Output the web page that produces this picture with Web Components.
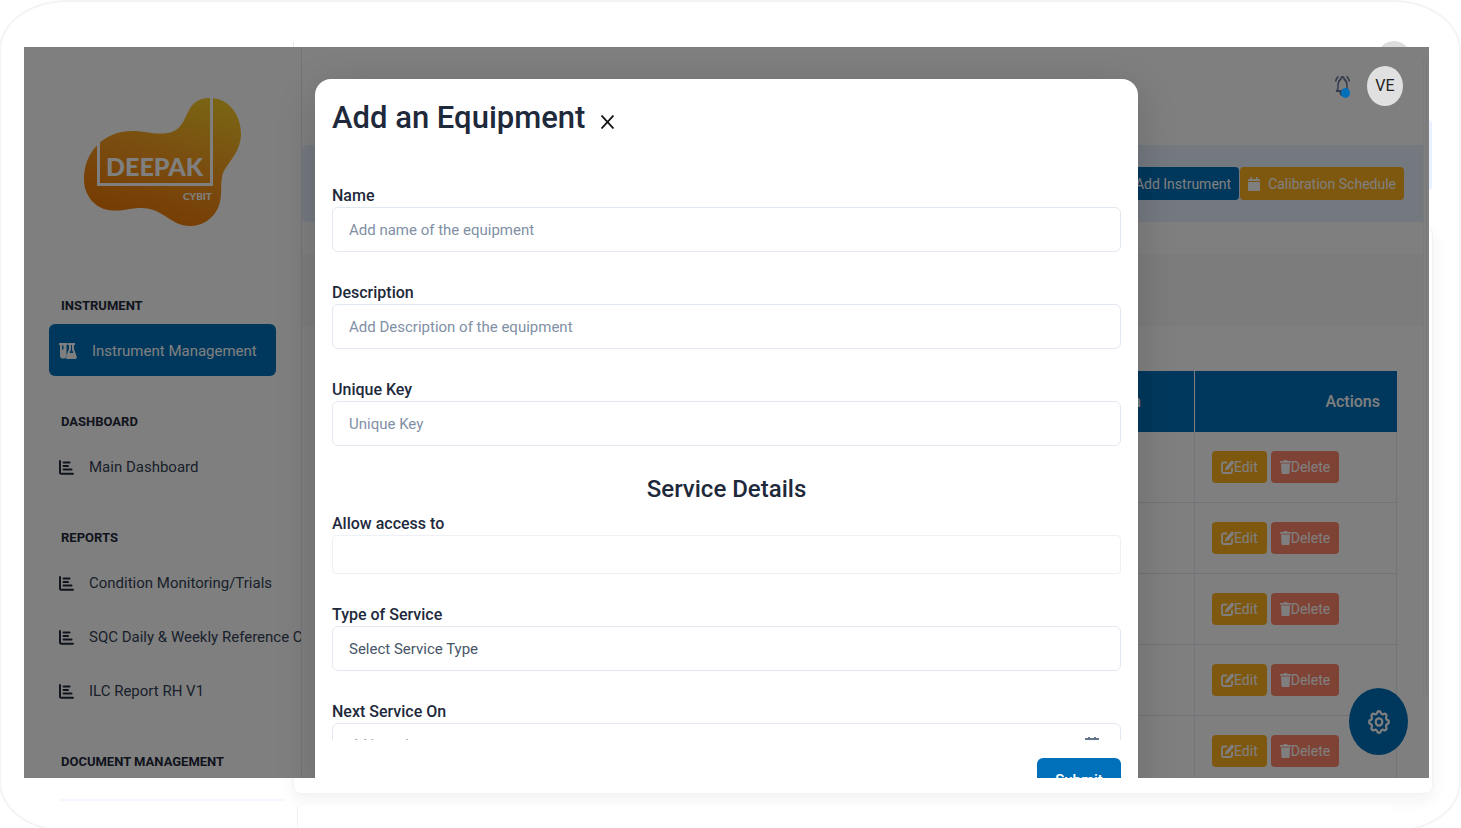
<!DOCTYPE html>
<html lang="en">
<head>
<meta charset="utf-8">
<meta name="viewport" content="width=device-width, initial-scale=1">
<title>Instrument Management</title>
<style>
  :root {
    --primary: #0070ba;
    --amber: #ffb01e;
    --coral: #fe866c;
    --ink: #1e293b;
    --line: #e2e8f0;
  }
  html, body { margin: 0; }
  body {
    font-family: Roboto, "Noto Sans", sans-serif;
    font-size: 16px;
    line-height: 24px;
    color: var(--ink);
    background: #fff;
    overflow: hidden;
  }
</style>
</head>
<body>
<app-frame>
  <side-nav slot="nav">
    <nav-section heading="INSTRUMENT">
      <nav-item icon="flask" active>Instrument Management</nav-item>
    </nav-section>
    <nav-section heading="DASHBOARD">
      <nav-item icon="chart">Main Dashboard</nav-item>
    </nav-section>
    <nav-section heading="REPORTS">
      <nav-item icon="chart">Condition Monitoring/Trials</nav-item>
      <nav-item icon="chart">SQC Daily &amp; Weekly Reference C</nav-item>
      <nav-item icon="chart">ILC Report RH V1</nav-item>
    </nav-section>
    <nav-section heading="DOCUMENT MANAGEMENT"></nav-section>
  </side-nav>
  <top-bar slot="main"></top-bar>
  <action-band slot="main"></action-band>
  <instrument-table slot="main" rows="5"></instrument-table>
  <settings-button slot="float"></settings-button>
  <equipment-dialog slot="dialog" heading="Add an Equipment">
    <form-field label="Name" placeholder="Add name of the equipment"></form-field>
    <form-field label="Description" placeholder="Add Description of the equipment"></form-field>
    <form-field label="Unique Key" placeholder="Unique Key"></form-field>
    <section-title>Service Details</section-title>
    <form-field label="Allow access to" kind="compact"></form-field>
    <form-field label="Type of Service" kind="select" placeholder="Select Service Type"></form-field>
    <form-field label="Next Service On" kind="date" placeholder="dd/mm/yyyy"></form-field>
  </equipment-dialog>
</app-frame>

<script>
const ICONS = {
  flask: `<svg width="18" height="18" viewBox="0 0 18 18" fill="currentColor" aria-hidden="true"><path fill-rule="evenodd" d="M0 1h8.500v2H7.500v9.500a3 3 0 0 1-3 4A3 3 0 0 1 1 13V3H0zM3 3.500v4h1.500v-4zM9 1h7v2h-1v4l2.700 7.500c.5 1.500-.3 2.500-1.700 2.500H8.500c-1.300 0-2-1-1.500-2.300L10 7V3H9zM12 3v4.500L10.700 11h3.600L13 7.500V3z"/></svg>`,
  chart: `<svg width="15" height="15" viewBox="0 0 15 15" fill="none" stroke="currentColor" stroke-width="2" stroke-linecap="round" aria-hidden="true"><path d="M1 1v11.500q0 1.200 1.200 1.200H14M4.500 2.500h6M4.500 6h4.500M4.500 9.500h8"/></svg>`,
  calendar: `<svg width="12" height="14" viewBox="0 0 12 14" fill="currentColor" aria-hidden="true"><path d="M2.500 0h1.500v2h4V0h1.500v2H11a1 1 0 0 1 1 1v1H0V3a1 1 0 0 1 1-1h1.500zM0 5h12v8a1 1 0 0 1-1 1H1a1 1 0 0 1-1-1z"/></svg>`,
  edit: `<svg width="13" height="14" viewBox="0 0 13 14" aria-hidden="true"><path d="M5.500 2.500H2.500Q1 2.500 1 4v7.500Q1 13 2.500 13h7q1.500 0 1.500-1.500V8.500" fill="none" stroke="currentColor" stroke-width="1.800" stroke-linecap="round"/><path d="M4 10.500l.7-3.200L10 1.200a1.300 1.300 0 0 1 2 0l.5.600a1.300 1.300 0 0 1 0 1.800L7.200 9.600z" fill="currentColor"/></svg>`,
  trash: `<svg width="11" height="14" viewBox="0 0 11 14" fill="currentColor" aria-hidden="true"><path d="M0 1h3.500L4 0h3l.5 1H11v1.800H0zM1 3.600h9L9.500 13a1 1 0 0 1-1 1h-6a1 1 0 0 1-1-1z"/></svg>`,
  bell: `<svg width="15" height="20" viewBox="2 2 20 20" preserveAspectRatio="none" fill="none" stroke="currentColor" stroke-width="2" stroke-linecap="round" stroke-linejoin="round" aria-hidden="true"><path d="M10 5a2 2 0 0 1 4 0a7 7 0 0 1 4 6v3a4 4 0 0 0 2 3h-16a4 4 0 0 0 2-3v-3a7 7 0 0 1 4-6M9 17v1a3 3 0 0 0 6 0v-1M21 6.727a11.050 11.050 0 0 0-2.794-3.727M3 6.727a11.050 11.050 0 0 1 2.792-3.727"/></svg>`,
  gear: `<svg width="22" height="24" viewBox="2 2 20 20" preserveAspectRatio="none" fill="none" stroke="currentColor" stroke-width="2" stroke-linejoin="round" aria-hidden="true"><path d="M10.325 4.317c.426-1.756 2.924-1.756 3.350 0a1.724 1.724 0 0 0 2.573 1.066c1.543-.94 3.310.826 2.370 2.370a1.724 1.724 0 0 0 1.065 2.572c1.756.426 1.756 2.924 0 3.350a1.724 1.724 0 0 0-1.066 2.573c.94 1.543-.826 3.310-2.370 2.370a1.724 1.724 0 0 0-2.572 1.065c-.426 1.756-2.924 1.756-3.350 0a1.724 1.724 0 0 0-2.573-1.066c-1.543.94-3.310-.826-2.370-2.370a1.724 1.724 0 0 0-1.065-2.572c-1.756-.426-1.756-2.924 0-3.350a1.724 1.724 0 0 0 1.066-2.573c-.94-1.543.826-3.310 2.370-2.370c1 .608 2.296.07 2.572-1.065z"/><circle cx="12" cy="12" r="3"/></svg>`
};

class Base extends HTMLElement {
  connectedCallback() {
    if (this.shadowRoot) return;
    this.attachShadow({ mode: "open" }).innerHTML =
      `<style>*{box-sizing:border-box}svg{display:block;flex:none}button,input,select{font:inherit;margin:0}${this.styles()}</style>${this.markup()}`;
  }
}

customElements.define("app-frame", class extends Base {
  styles() { return `
    :host { display: block; box-sizing: border-box; position: relative; height: 100vh; padding: 47px 32px 50px 24px; overflow: hidden; }
    .outline { position: absolute; inset: 0 0 -4px -1px; border: 2px solid #f4f4f4; border-radius: 68px / 50px; }
    .sheet { position: absolute; inset: 226px 28px 34px 293px; border: 1px solid #f0f2f6; border-radius: 8px; box-shadow: 0 6px 16px rgba(30,41,59,.06); }
    .under { position: absolute; inset: auto 70px 0 297px; height: 22px; border-left: 1px solid #eff1f4; background: #fff; }
    .rule { position: absolute; left: 60px; width: 224px; bottom: 27px; height: 2px; background: #f4f7ff; }
    .tick { position: absolute; left: 293px; top: 42px; width: 1px; height: 5px; background: #e4e6ea; }
    .tab { position: absolute; right: 29px; top: 120px; width: 8px; height: 70px; border-radius: 4px; background: #e9f0ff; }
    .disc { position: absolute; right: 49px; top: 41px; width: 36px; height: 40px; border-radius: 50%; background: #dcdcdc; }
    .screen { position: relative; height: 100%; display: flex; overflow: hidden; background: #fff; }
    nav { flex: 0 0 278px; min-width: 0; overflow: hidden; border-right: 1px solid #e7e9ee; }
    main { flex: 1; min-width: 0; padding-right: 5px; display: flex; flex-direction: column; }
    .scroll { position: absolute; right: 3px; top: 14px; bottom: 84px; width: 2px; background: #fff; box-shadow: 0 0 0 1px #f4f4f4; }
    .shade { position: absolute; inset: 0; z-index: 1; background: rgba(0,0,0,.5); }
  `; }
  markup() { return `
    <div class="outline"></div><div class="sheet"></div><div class="under"></div><div class="rule"></div>
    <div class="tick"></div><div class="tab"></div><div class="disc"></div>
    <div class="screen">
      <nav><slot name="nav"></slot></nav>
      <main><slot name="main"></slot></main>
      <div class="scroll"></div>
      <slot name="float"></slot>
      <div class="shade"></div>
      <slot name="dialog"></slot>
    </div>`; }
});

customElements.define("brand-logo", class extends Base {
  styles() { return `:host { display: block; width: 158px; height: 130px; } text { font-family: Lato, sans-serif; font-weight: 900; fill: #fff; }`; }
  markup() { return `
    <svg width="158" height="130" viewBox="0 0 158 130" role="img" aria-label="Deepak Cybit">
      <defs><linearGradient id="g" x1=".75" y1="0" x2=".35" y2="1">
        <stop offset="0" stop-color="#f4c828"/><stop offset=".5" stop-color="#f5981e"/><stop offset="1" stop-color="#ec7604"/>
      </linearGradient></defs>
      <path fill="url(#g)" d="M126 1C144 1 157 17 157 37C157 57 140 68 138 80C136 92 139 99 134 111C129 122 118 129 106 129C86 129 80 111 57 111C45 111 38 115 24 113C9 110 0 97 0 82C0 55 20 34 48 34C62 34 70 38 84 36C108 32 97 1 126 1Z"/>
      <path d="M14.500 44V87.500H127.500V0" fill="none" stroke="#fff" stroke-width="3"/>
      <text x="22" y="79" font-size="25">DEEPAK</text>
      <text x="99" y="103" font-size="10">CYBIT</text>
    </svg>`; }
});

customElements.define("side-nav", class extends Base {
  styles() { return `
    :host { display: flex; flex-direction: column; gap: 33px; }
    header { height: 213px; padding: 50px 0 0 60px; }
  `; }
  markup() { return `<header><brand-logo></brand-logo></header><slot></slot>`; }
});

customElements.define("nav-section", class extends Base {
  styles() { return `
    :host { display: flex; flex-direction: column; gap: 2px; }
    h2 { margin: 0 0 5px 37px; padding-top: 2px; font-size: 13px; line-height: 22px; font-weight: 700; white-space: nowrap; }
  `; }
  markup() { return `<h2>${this.getAttribute("heading")}</h2><slot></slot>`; }
});

customElements.define("nav-item", class extends Base {
  styles() { return `
    :host { display: block; padding-left: 25px; font-size: 15px; }
    a { display: flex; align-items: center; gap: 15px; height: 52px; padding: 2px 0 0 10px; color: #334155; text-decoration: none; white-space: nowrap; }
    svg { color: var(--ink); }
    :host([active]) { padding-right: 25px; }
    :host([active]) a { background: var(--primary); color: #fff; border-radius: 6px; }
    :host([active]) svg { color: #fff; }
  `; }
  markup() { return `<a href="#">${ICONS[this.getAttribute("icon")]}<span><slot></slot></span></a>`; }
});

customElements.define("top-bar", class extends Base {
  styles() { return `
    :host { display: flex; justify-content: flex-end; flex: 0 0 98px; box-sizing: border-box; padding: 19px 21px 0 0; }
    .user { position: relative; z-index: 3; display: flex; align-items: center; gap: 17px; height: 40px; }
    button { border: 0; padding: 0; background: none; color: #343c4d; position: relative; }
    .dot::after { content: ""; position: absolute; right: 0; bottom: -2px; width: 9px; height: 10px; border-radius: 50%; background: var(--primary); }
    .avatar { width: 36px; height: 40px; border-radius: 50%; background: #e0e0e0; color: #222; }
  `; }
  markup() { return `<div class="user"><button class="dot" aria-label="Notifications">${ICONS.bell}</button><button class="avatar">VE</button></div>`; }
});

customElements.define("action-band", class extends Base {
  styles() { return `
    :host { display: flex; justify-content: flex-end; align-items: center; gap: 1px; flex: 0 0 77px; box-sizing: border-box; padding-right: 20px; background: #e9f0ff; border-radius: 6px 0 0 6px; }
    button { display: flex; align-items: center; gap: 8px; height: 33px; padding: 0 8px; border: 0; border-radius: 4px; color: #fff; background: var(--primary); font-size: 14px; white-space: nowrap; }
    .cal { background: var(--amber); }
  `; }
  markup() { return `<button>Add Instrument</button><button class="cal">${ICONS.calendar}Calibration Schedule</button>`; }
});

customElements.define("instrument-table", class extends Base {
  styles() { return `
    :host { display: block; margin-top: 32px; }
    .head { height: 72px; background: #f8f8f8; }
    .wrap { padding: 45px 27px 0 24px; }
    table { width: 100%; border-collapse: separate; border-spacing: 0; table-layout: fixed; }
    th { height: 61px; padding: 0 17px; background: var(--primary); color: #fff; font-weight: 500; text-align: right; }
    th:first-child { padding-right: 53px; border-right: 1px solid #fff; }
    th:last-child, td:last-child { width: 202px; }
    td { height: 71px; padding: 0 17px; border-right: 1px solid #e9ebf2; border-bottom: 1px solid #e4e7f0; }
    .acts { display: flex; gap: 4px; }
    button { display: flex; align-items: center; height: 32px; padding: 0 9px; border: 0; border-radius: 4px; color: #fff; background: var(--amber); font-size: 14px; }
    .del { background: var(--coral); }
  `; }
  markup() {
    const row = `<tr><td></td><td><div class="acts"><button>${ICONS.edit}Edit</button><button class="del">${ICONS.trash}Delete</button></div></td></tr>`;
    return `<div class="head"></div><div class="wrap"><table><thead><tr><th>Location</th><th>Actions</th></tr></thead><tbody>${row.repeat(+this.getAttribute("rows"))}</tbody></table></div>`;
  }
});

customElements.define("settings-button", class extends Base {
  styles() { return `
    :host { position: absolute; right: 21px; bottom: 23px; }
    button { display: grid; place-items: center; width: 59px; height: 67px; border: 0; border-radius: 50%; background: var(--primary); color: #fff; }
  `; }
  markup() { return `<button aria-label="Settings">${ICONS.gear}</button>`; }
});

customElements.define("section-title", class extends Base {
  styles() { return `:host { display: block; margin-bottom: 7px; } h3 { margin: 0; font-size: 24px; line-height: 30px; font-weight: 500; text-align: center; }`; }
  markup() { return `<h3><slot></slot></h3>`; }
});

customElements.define("form-field", class extends Base {
  styles() { return `
    :host { display: block; margin-bottom: 28px; }
    label { display: block; padding-top: 1px; line-height: 23px; font-size: 16px; font-weight: 500; }
    .box { position: relative; }
    input, select { display: block; width: 100%; height: 45px; padding: 1px 16px 0; border: 1px solid var(--line); border-radius: 6px; background: #fff; color: #475569; font-size: 15px; appearance: none; outline: 0; }
    input::placeholder { color: #8190a5; opacity: 1; }
    .compact { height: 39px; border-color: #edf1f6; border-radius: 4px; }
    .date { padding-top: 0; font-size: 16px; }
    .picker { position: absolute; right: 22px; top: 13px; color: #64748b; }
  `; }
  markup() {
    const kind = this.getAttribute("kind") || "text";
    const hint = this.getAttribute("placeholder") || "";
    const control = kind === "select"
      ? `<select id="c"><option>${hint}</option></select>`
      : `<input id="c" type="text" class="${kind}" placeholder="${hint}">`;
    const picker = kind === "date"
      ? `<svg class="picker" width="14" height="16" viewBox="0 0 14 16" fill="none" stroke="currentColor" stroke-width="2" aria-hidden="true"><path d="M1 3h12v12H1zM4 1v2M10 1v2"/></svg>` : "";
    return `<label for="c">${this.getAttribute("label")}</label><div class="box">${control}${picker}</div>`;
  }
});

customElements.define("equipment-dialog", class extends Base {
  styles() { return `
    :host { position: absolute; inset: 32px 0 auto; z-index: 2; height: 100%; display: flex; justify-content: center; pointer-events: none; }
    section { pointer-events: auto; width: 823px; max-width: 90%; height: 100%; display: flex; flex-direction: column; background: #fff; border-radius: 16px; box-shadow: 0 10px 40px rgba(0,0,0,.16); }
    header { display: flex; align-items: center; gap: 16px; padding: 15px 17px 41px; }
    h1 { margin: 0; font-size: 31px; line-height: 48px; font-weight: 500; white-space: nowrap; }
    .close { border: 0; padding: 8px 0 0; background: none; color: #111; }
    form { flex: 1; min-height: 0; overflow: hidden; padding: 0 17px; }
    footer { flex: 0 0 70px; display: flex; justify-content: flex-end; align-items: flex-start; padding: 18px 17px 0; }
    .submit { height: 44px; width: 84px; border: 0; border-radius: 6px; background: var(--primary); color: #fff; font-size: 15px; font-weight: 500; }
  `; }
  markup() { return `
    <section role="dialog" aria-labelledby="t">
      <header><h1 id="t">${this.getAttribute("heading")}</h1>
        <button class="close" aria-label="Close"><svg width="13" height="14" viewBox="0 0 13 14" fill="none" stroke="currentColor" stroke-width="1.800" aria-hidden="true"><path d="M.5.500l12 13M12.500.500l-12 13"/></svg></button></header>
      <form><slot></slot></form>
      <footer><button class="submit" type="button">Submit</button></footer>
    </section>`; }
});
</script>
</body>
</html>
